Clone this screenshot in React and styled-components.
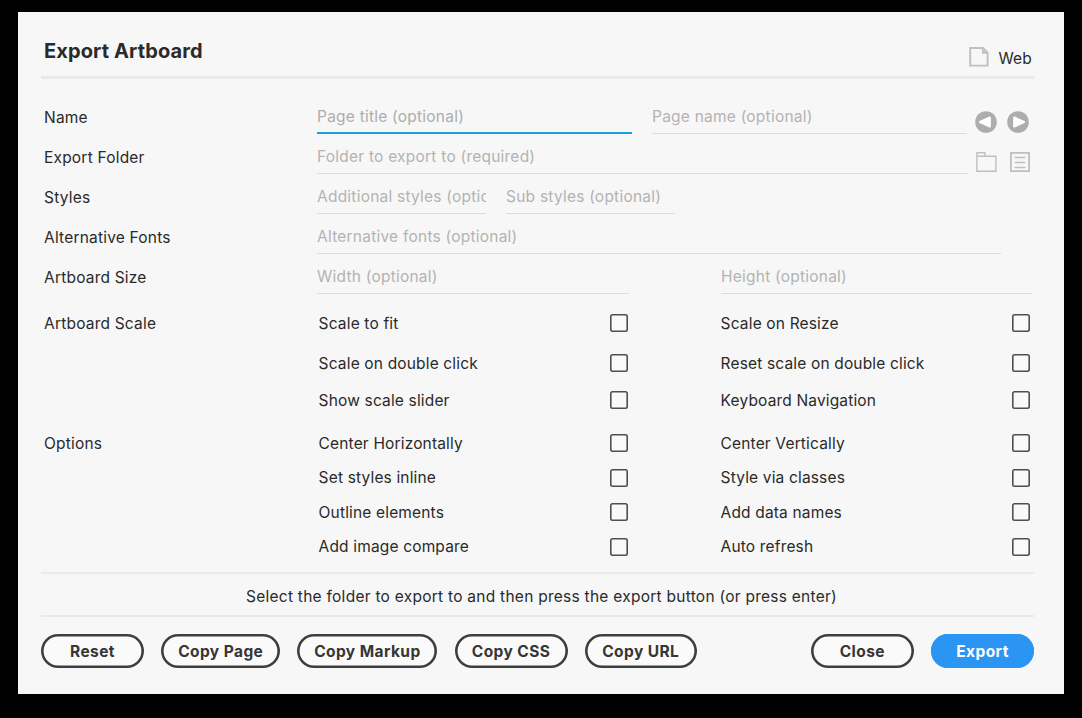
import React from "react";
import styled, { createGlobalStyle } from "styled-components";

const GlobalStyle = createGlobalStyle`
  * { box-sizing: border-box; }
  body {
    margin: 0;
    background: #000;
    color: #2a2a2a;
    font-family: Inter, "Liberation Sans", sans-serif;
    font-size: 15.5px;
    line-height: 20px;
    letter-spacing: 0.2px;
  }
`;

const Screen = styled.div`
  width: 1082px;
  height: 718px;
  padding: 12px 18px 24px;
  background: #000;
`;

const Dialog = styled.main`
  display: flex;
  flex-direction: column;
  height: 682px;
  padding: 0 30px 0 23px;
  background: #f7f7f7;
`;

const Header = styled.header`
  display: flex;
  justify-content: space-between;
  height: 67px;
  padding: 0 2px 0 3px;
  border-bottom: 3px solid #e9e9e9;
`;

const Title = styled.h1`
  margin: 27px 0 0;
  font-size: 20px;
  line-height: 24px;
  font-weight: 700;
  letter-spacing: 0.12px;
`;

const Platform = styled.div`
  display: flex;
  align-items: center;
  gap: 9.5px;
  height: 20px;
  margin-top: 35px;
`;

const PlatformName = styled.span`
  padding-top: 3px;
`;

const Text = styled.span`
  padding-top: ${(p) => p.$drop || 0}px;
  letter-spacing: ${(p) => p.$ls || 0.16}px;
  white-space: nowrap;
`;

const Form = styled.section`
  display: flex;
  flex-direction: column;
  padding-top: 15px;
`;

const FieldRow = styled.div`
  display: grid;
  grid-template-columns: 276px ${(p) => p.$columns};
  height: 40px;
`;

const Label = styled.label`
  padding: 14px 0 0 3px;
  white-space: nowrap;
`;

const Field = styled.input`
  width: 100%;
  min-width: 0;
  height: 40px;
  margin: 0;
  padding: ${(p) => (p.$active ? 7 : 6)}px 0 0;
  border: 0;
  border-bottom: ${(p) => (p.$active ? "2px solid #16a0e3" : "1px solid #dcdcdc")};
  border-radius: 0;
  outline: 0;
  background: transparent;
  font: inherit;
  letter-spacing: 0.23px;
  &::placeholder { color: ${(p) => (p.$active ? "#adadad" : "#b3b3b3")}; opacity: 1; }
`;

const IconPair = styled.div`
  display: flex;
  align-items: center;
  gap: ${(p) => p.$gap}px;
  padding: ${(p) => p.$pad};
  height: 40px;
`;

const CheckGroup = styled.div`
  display: grid;
  grid-template-columns: 277.6px 309.4px 92.6px 309.4px;
  grid-template-rows: ${(p) => p.$rows};
  align-items: center;
  margin-top: ${(p) => p.$top}px;
`;

const GroupLabel = styled.div`
  grid-column: 1;
  padding: 1px 0 0 3px;
`;

const CheckItem = styled.label`
  grid-column: ${(p) => (p.$right ? 4 : 2)};
  display: flex;
  align-items: center;
  justify-content: space-between;
`;

const Checkbox = styled.input`
  appearance: none;
  width: 18px;
  height: 18px;
  margin: 0;
  border: 0;
  border-radius: 2.5px;
  box-shadow: inset 0 0 0 1.6px #4f4f4f;
  background: #f9f9f9;
`;

const Message = styled.p`
  display: flex;
  align-items: center;
  justify-content: center;
  height: 45px;
  margin: 8px 0 0;
  padding: 4px 0 0 8px;
  border-top: 2px solid #eaeaea;
  border-bottom: 2px solid #eaeaea;
`;

const Footer = styled.footer`
  display: flex;
  gap: 17.2px;
  padding-top: 17px;
`;

const Button = styled.button`
  width: ${(p) => p.$w}px;
  height: 34px;
  margin: 0 0 0 ${(p) => (p.$push ? "auto" : 0)};
  padding: 2px 0 0;
  border: 0;
  border-radius: 17px;
  box-shadow: inset 0 0 0 2.6px ${(p) => (p.$primary ? "#2b95f3" : "#3e3e3e")};
  background: ${(p) => (p.$primary ? "#2b95f3" : "#fafafa")};
  color: ${(p) => (p.$primary ? "#fff" : "#363636")};
  font: 700 15.5px/20px Inter, "Liberation Sans", sans-serif;
  letter-spacing: 0.42px;
  white-space: nowrap;
`;

const Svg = styled.svg`
  display: block;
  flex: none;
`;

const PageIcon = () => (
  <Svg width="20" height="20" viewBox="0 0 20 20" fill="none" stroke="#bfbfbf" strokeWidth="1.9">
    <path d="M1.2 1H14L18.6 5.6V18.6H1.2Z" />
    <path d="M14 1V5.8H18.6" />
    <path d="M14 1V5.8H18.6Z" fill="#c6c6c6" stroke="none" />
  </Svg>
);

const ArrowIcon = ({ flip }) => (
  <Svg width="22" height="22" viewBox="0 0 22 22">
    <circle cx="11" cy="11" r="10.8" fill="#adadad" />
    <path
      d={flip ? "M5 11L14.8 6.6V15.6Z" : "M17 11L7.2 6.6V15.6Z"}
      fill="#fff"
      stroke="#fff"
      strokeWidth="2.2"
      strokeLinejoin="round"
    />
  </Svg>
);

const FolderIcon = () => (
  <Svg width="21" height="20" viewBox="0 0 21 20" fill="none" stroke="#bfbfbf" strokeWidth="1.4">
    <path d="M0.9 0.8H8.9V4.2H19.9V19.2H0.9ZM0.9 4.2H8.9" />
  </Svg>
);

const ListIcon = () => (
  <Svg width="20" height="20" viewBox="0 0 20 20" fill="none" stroke="#bfbfbf" strokeWidth="1.8">
    <path d="M0.9 0.9H19.1V19.1H0.9Z" />
    <path d="M4.7 5.5H15.3M4.7 10.5H15.3M4.7 15.5H15.3" strokeWidth="1.4" />
  </Svg>
);

const SCALE = [
  ["Scale to fit", "Scale on Resize"],
  ["Scale on double click", "Reset scale on double click"],
  ["Show scale slider", "Keyboard Navigation"],
];

const OPTIONS = [
  ["Center Horizontally", "Center Vertically"],
  ["Set styles inline", "Style via classes"],
  ["Outline elements", "Add data names"],
  ["Add image compare", "Auto refresh"],
];

const Check = ({ label, right }) => (
  <CheckItem $right={right}>
    <Text $drop={1}>{label}</Text>
    <Checkbox type="checkbox" />
  </CheckItem>
);

const Checks = ({ title, items, rows, top }) => (
  <CheckGroup $rows={rows} $top={top}>
    {items.map(([left, right], i) => (
      <React.Fragment key={left}>
        {i === 0 && <GroupLabel>{title}</GroupLabel>}
        <Check label={left} />
        <Check label={right} right />
      </React.Fragment>
    ))}
  </CheckGroup>
);

export default function App() {
  return (
    <Screen>
      <GlobalStyle />
      <Dialog>
        <Header>
          <Title>Export Artboard</Title>
          <Platform>
            <PageIcon />
            <PlatformName>Web</PlatformName>
          </Platform>
        </Header>
        <Form>
          <FieldRow $columns="315px 20px 315px 1fr">
            <Label>Name</Label>
            <Field $active placeholder="Page title (optional)" />
            <span />
            <Field placeholder="Page name (optional)" />
            <IconPair $gap={9.5} $pad="15px 0 0 8px">
              <ArrowIcon flip />
              <ArrowIcon />
            </IconPair>
          </FieldRow>
          <FieldRow $columns="651px 1fr">
            <Label>Export Folder</Label>
            <Field placeholder="Folder to export to (required)" />
            <IconPair $gap={13} $pad="16px 0 0 8px">
              <FolderIcon />
              <ListIcon />
            </IconPair>
          </FieldRow>
          <FieldRow $columns="169px 20px 169px">
            <Label>Styles</Label>
            <Field placeholder="Additional styles (optional)" />
            <span />
            <Field placeholder="Sub styles (optional)" />
          </FieldRow>
          <FieldRow $columns="684px">
            <Label>Alternative Fonts</Label>
            <Field placeholder="Alternative fonts (optional)" />
          </FieldRow>
          <FieldRow $columns="312px 92px 311px">
            <Label>Artboard Size</Label>
            <Field placeholder="Width (optional)" />
            <span />
            <Field placeholder="Height (optional)" />
          </FieldRow>
          <Checks title="Artboard Scale" items={SCALE} rows="40px 40px 34px" top={9} />
          <Checks title="Options" items={OPTIONS} rows="34px 35px 34px 35px" top={9} />
        </Form>
        <Message>
          <Text $ls={0.26}>Select the folder to export to and then press the export button (or press enter)</Text>
        </Message>
        <Footer>
          <Button $w={103}>Reset</Button>
          <Button $w={119}>Copy Page</Button>
          <Button $w={140}>Copy Markup</Button>
          <Button $w={113}>Copy CSS</Button>
          <Button $w={112}>Copy URL</Button>
          <Button $w={103} $push>Close</Button>
          <Button $w={103} $primary>Export</Button>
        </Footer>
      </Dialog>
    </Screen>
  );
}
